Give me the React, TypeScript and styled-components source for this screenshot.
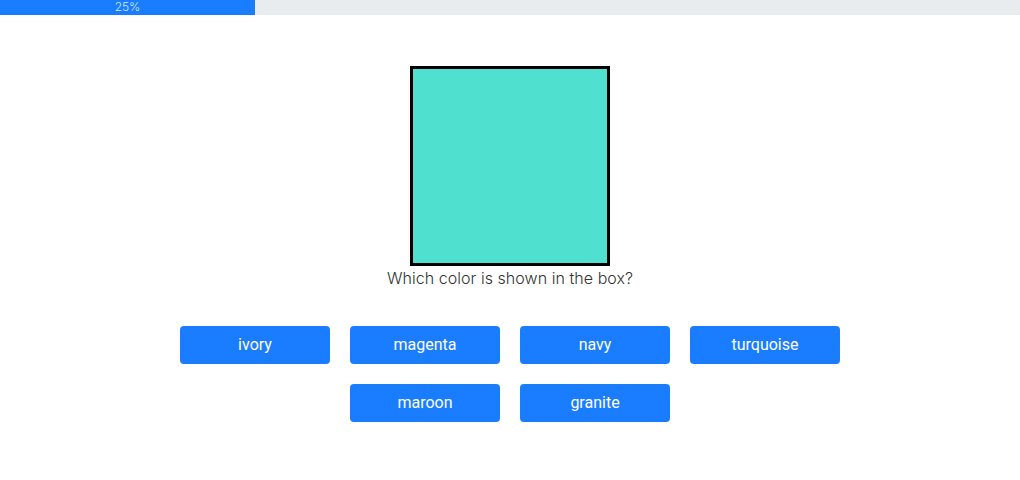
import React from "react";
import styled, { createGlobalStyle } from "styled-components";

const Global = createGlobalStyle`
  html, body { margin: 0; padding: 0; background: #fff; }
  body { font-family: Roboto, "Liberation Sans", sans-serif; }
`;

const Page = styled.div`
  display: flex;
  flex-direction: column;
  align-items: center;
`;

const Progress = styled.div`
  align-self: stretch;
  height: 15px;
  background: #e9ecef;
  display: flex;
`;

const ProgressFill = styled.div`
  height: 100%;
  background: #1a7dff;
  color: #d6e6ff;
  font-size: 12px;
  line-height: 14px;
  text-align: center;
  font-family: Inter, sans-serif;
  font-weight: 300;
`;

const ColorBox = styled.div<{ $color: string }>`
  margin-top: 51px;
  width: 200px;
  height: 200px;
  box-sizing: border-box;
  border: 3px solid #000;
  background: ${(p) => p.$color};
`;

const Question = styled.div`
  font-family: Inter, sans-serif;
  font-weight: 300;
  font-size: 16px;
  letter-spacing: 0.05px;
  line-height: 24px;
  color: #333;
`;

const Options = styled.div`
  margin-top: 36px;
  width: 660px;
  display: flex;
  flex-wrap: wrap;
  justify-content: center;
  gap: 20px;
`;

const Option = styled.button`
  width: 150px;
  height: 38px;
  border: none;
  border-radius: 4px;
  background: #1a7dff;
  color: #fff;
  font-family: Roboto, sans-serif;
  font-size: 16px;
  padding: 0 0 2px;
  cursor: pointer;
`;

const options = ["ivory", "magenta", "navy", "turquoise", "maroon", "granite"];

export default function App() {
  const pct = 25;
  return (
    <>
      <Global />
      <Page>
        <Progress>
          <ProgressFill style={{ width: `${pct}%` }}>{pct}%</ProgressFill>
        </Progress>
        <ColorBox $color="#4fe0d0" />
        <Question>Which color is shown in the box?</Question>
        <Options>
          {options.map((o) => (
            <Option key={o}>{o}</Option>
          ))}
        </Options>
      </Page>
    </>
  );
}
